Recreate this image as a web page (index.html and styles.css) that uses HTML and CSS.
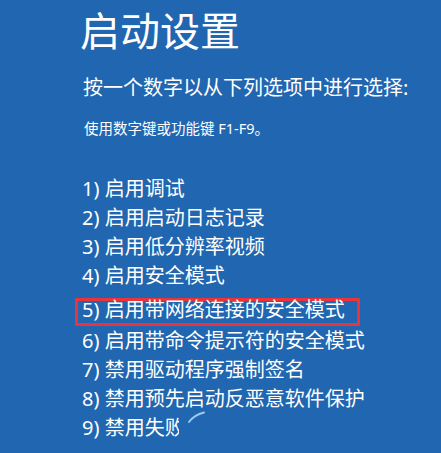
FILE: index.html
```html
<!DOCTYPE html>
<html lang="zh-CN">
<head>
<meta charset="utf-8">
<link rel="stylesheet" href="styles.css">
</head>
<body>
<div class="screen">
  <h1 class="title">启动设置</h1>
  <p class="prompt">按一个数字以从下列选项中进行选择:</p>
  <p class="hint">使用数字键或功能键 F1-F9。</p>
  <ol class="options">
    <li>1) 启用调试</li>
    <li>2) 启用启动日志记录</li>
    <li>3) 启用低分辨率视频</li>
    <li>4) 启用安全模式</li>
    <li class="marked">5) 启用带网络连接的安全模式</li>
    <li>6) 启用带命令提示符的安全模式</li>
    <li>7) 禁用驱动程序强制签名</li>
    <li>8) 禁用预先启动反恶意软件保护</li>
    <li class="last"><span class="cut">9) 禁用失败</span><svg class="spinner" width="24" height="20" viewBox="0 0 24 20"><path d="M2 12 Q7 5 17 2.5" fill="none" stroke="#9ccbf2" stroke-width="2" stroke-linecap="round"/></svg></li>
  </ol>
</div>
</body>
</html>
```
FILE: styles.css
```css
html, body {
  margin: 0;
  padding: 0;
  background: #2166b0;
}
.screen {
  width: 441px;
  height: 453px;
  overflow: hidden;
  box-sizing: border-box;
  padding: 4px 0 0 80px;
  color: #ffffff;
  font-family: "Noto Sans", "Noto Sans CJK SC", sans-serif;
}
.title {
  margin: 0;
  font-weight: 400;
  font-size: 40px;
  line-height: 54px;
}
.prompt {
  margin: 17px 0 0 3px;
  font-size: 20px;
  line-height: 26px;
}
.hint {
  margin: 17px 0 0 4px;
  font-size: 14.5px;
  line-height: 20px;
}
.options {
  list-style: none;
  margin: 36px 0 0 0;
  padding: 0;
}
.options li {
  font-size: 20px;
  line-height: 29px;
  height: 29px;
  padding-left: 2px;
  white-space: nowrap;
}
.options li.marked {
  width: 275px;
  height: 22px;
  line-height: 18px;
  border: 3px solid #e8343a;
  margin: 8px 0 0 -5px;
  padding-left: 4px;
}
.last {
  position: relative;
}
.cut {
  display: inline-block;
  width: 97px;
  overflow: hidden;
  vertical-align: top;
}
.spinner {
  position: absolute;
  left: 107px;
  top: -3px;
}
```
